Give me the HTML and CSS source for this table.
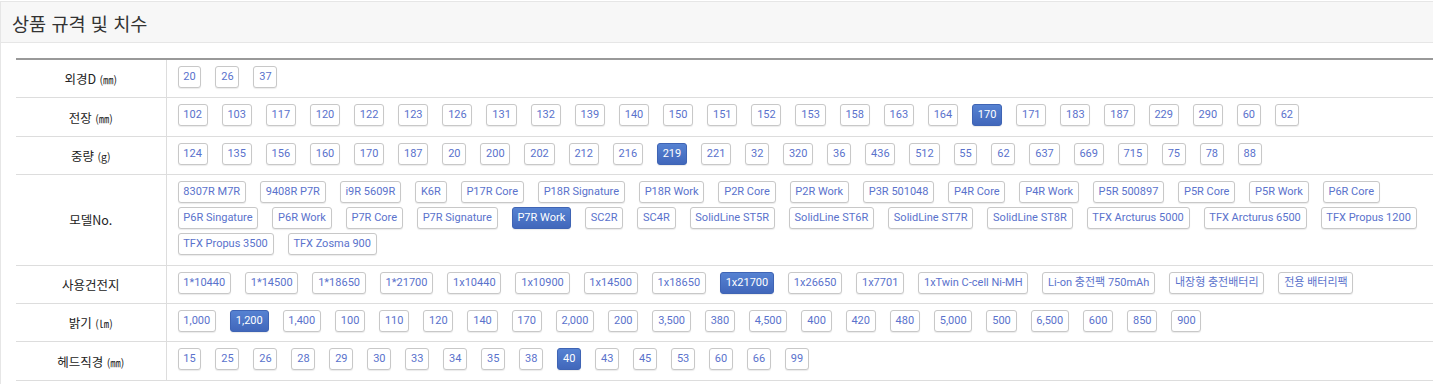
FILE: index.html
```html
<!DOCTYPE html>
<html lang="ko">
<head>
<meta charset="utf-8">
<title>상품 규격 및 치수</title>
<link rel="stylesheet" href="styles.css">
</head>
<body>
<section class="panel">
  <header class="panel-head"><h2 class="panel-title">상품 규격 및 치수</h2></header>
  <div class="panel-body">
    <table class="spec">
      <tbody>
        <tr>
          <th>외경D <small>(㎜)</small></th>
          <td><div class="opts"><span class="opt">20</span><span class="opt">26</span><span class="opt">37</span></div></td>
        </tr>
        <tr>
          <th>전장 <small>(㎜)</small></th>
          <td><div class="opts"><span class="opt">102</span><span class="opt">103</span><span class="opt">117</span><span class="opt">120</span><span class="opt">122</span><span class="opt">123</span><span class="opt">126</span><span class="opt">131</span><span class="opt">132</span><span class="opt">139</span><span class="opt">140</span><span class="opt">150</span><span class="opt">151</span><span class="opt">152</span><span class="opt">153</span><span class="opt">158</span><span class="opt">163</span><span class="opt">164</span><span class="opt on">170</span><span class="opt">171</span><span class="opt">183</span><span class="opt">187</span><span class="opt">229</span><span class="opt">290</span><span class="opt">60</span><span class="opt">62</span></div></td>
        </tr>
        <tr>
          <th>중량 <small>(g)</small></th>
          <td><div class="opts"><span class="opt">124</span><span class="opt">135</span><span class="opt">156</span><span class="opt">160</span><span class="opt">170</span><span class="opt">187</span><span class="opt">20</span><span class="opt">200</span><span class="opt">202</span><span class="opt">212</span><span class="opt">216</span><span class="opt on">219</span><span class="opt">221</span><span class="opt">32</span><span class="opt">320</span><span class="opt">36</span><span class="opt">436</span><span class="opt">512</span><span class="opt">55</span><span class="opt">62</span><span class="opt">637</span><span class="opt">669</span><span class="opt">715</span><span class="opt">75</span><span class="opt">78</span><span class="opt">88</span></div></td>
        </tr>
        <tr>
          <th>모델No.</th>
          <td><div class="opts"><span class="opt">8307R M7R</span><span class="opt">9408R P7R</span><span class="opt">i9R 5609R</span><span class="opt">K6R</span><span class="opt">P17R Core</span><span class="opt">P18R Signature</span><span class="opt">P18R Work</span><span class="opt">P2R Core</span><span class="opt">P2R Work</span><span class="opt">P3R 501048</span><span class="opt">P4R Core</span><span class="opt">P4R Work</span><span class="opt">P5R 500897</span><span class="opt">P5R Core</span><span class="opt">P5R Work</span><span class="opt">P6R Core</span><span class="opt">P6R Singature</span><span class="opt">P6R Work</span><span class="opt">P7R Core</span><span class="opt">P7R Signature</span><span class="opt on">P7R Work</span><span class="opt">SC2R</span><span class="opt">SC4R</span><span class="opt">SolidLine ST5R</span><span class="opt">SolidLine ST6R</span><span class="opt">SolidLine ST7R</span><span class="opt">SolidLine ST8R</span><span class="opt">TFX Arcturus 5000</span><span class="opt">TFX Arcturus 6500</span><span class="opt">TFX Propus 1200</span><span class="opt">TFX Propus 3500</span><span class="opt">TFX Zosma 900</span></div></td>
        </tr>
        <tr>
          <th>사용건전지</th>
          <td><div class="opts"><span class="opt">1*10440</span><span class="opt">1*14500</span><span class="opt">1*18650</span><span class="opt">1*21700</span><span class="opt">1x10440</span><span class="opt">1x10900</span><span class="opt">1x14500</span><span class="opt">1x18650</span><span class="opt on">1x21700</span><span class="opt">1x26650</span><span class="opt">1x7701</span><span class="opt">1xTwin C-cell Ni-MH</span><span class="opt">Li-on 충전팩 750mAh</span><span class="opt">내장형 충전배터리</span><span class="opt">전용 배터리팩</span></div></td>
        </tr>
        <tr>
          <th>밝기 <small>(㏐)</small></th>
          <td><div class="opts"><span class="opt">1,000</span><span class="opt on">1,200</span><span class="opt">1,400</span><span class="opt">100</span><span class="opt">110</span><span class="opt">120</span><span class="opt">140</span><span class="opt">170</span><span class="opt">2,000</span><span class="opt">200</span><span class="opt">3,500</span><span class="opt">380</span><span class="opt">4,500</span><span class="opt">400</span><span class="opt">420</span><span class="opt">480</span><span class="opt">5,000</span><span class="opt">500</span><span class="opt">6,500</span><span class="opt">600</span><span class="opt">850</span><span class="opt">900</span></div></td>
        </tr>
        <tr>
          <th>헤드직경 <small>(㎜)</small></th>
          <td><div class="opts"><span class="opt">15</span><span class="opt">25</span><span class="opt">26</span><span class="opt">28</span><span class="opt">29</span><span class="opt">30</span><span class="opt">33</span><span class="opt">34</span><span class="opt">35</span><span class="opt">38</span><span class="opt on">40</span><span class="opt">43</span><span class="opt">45</span><span class="opt">53</span><span class="opt">60</span><span class="opt">66</span><span class="opt">99</span></div></td>
        </tr>
      </tbody>
    </table>
  </div>
</section>
</body>
</html>
```
FILE: styles.css
```css
html, body {
  margin: 0;
  padding: 0;
  overflow: hidden;
  background: #fff;
}

body {
  font-family: "Liberation Sans", "Noto Sans CJK KR", sans-serif;
  color: #333;
}

.panel {
  width: 1460px;
  margin-top: 1px;
  border: 1px solid #e6e6e6;
  box-sizing: border-box;
}

.panel-head {
  height: 40px;
  background: #f7f7f7;
  border-bottom: 1px solid #e6e6e6;
  display: flex;
  align-items: center;
  padding-left: 11px;
}

.panel-title {
  margin: 0;
  font-family: "Noto Sans CJK KR", sans-serif;
  font-size: 18.6px;
  font-weight: normal;
  color: #333;
  line-height: 1;
  position: relative;
  top: 1px;
}

.panel-body {
  padding: 15px 15px 20px 15px;
}

.spec {
  width: 100%;
  border-collapse: collapse;
  border-top: 2px solid #999;
}

.spec tr {
  border-bottom: 1px solid #ddd;
}

.spec th {
  width: 150px;
  box-sizing: border-box;
  padding: 0;
  font-family: "Noto Sans CJK KR", sans-serif;
  font-size: 12.5px;
  font-weight: normal;
  color: #222;
  text-align: center;
  vertical-align: middle;
  border-right: 1px solid #ddd;
}

.spec th small {
  font-size: 10.5px;
}

.spec td {
  padding: 6px 8px 9.4px 11px;
  vertical-align: top;
}

.opts {
  display: flex;
  flex-wrap: wrap;
  column-gap: 14px;
  row-gap: 4px;
}

.opt {
  display: block;
  height: 22px;
  box-sizing: border-box;
  padding: 0 4.8px;
  border: 1px solid #c8c8c8;
  border-radius: 3px;
  background: #fff;
  box-shadow: 0 1px 1px rgba(0, 0, 0, 0.08);
  font-family: Roboto, "Noto Sans CJK KR", sans-serif;
  font-size: 11px;
  line-height: 20px;
  color: #5a72cc;
  white-space: nowrap;
}

.opt.on {
  background: linear-gradient(#5682d2, #4167bb);
  border-color: #3f64b4;
  color: #fff;
}
```
